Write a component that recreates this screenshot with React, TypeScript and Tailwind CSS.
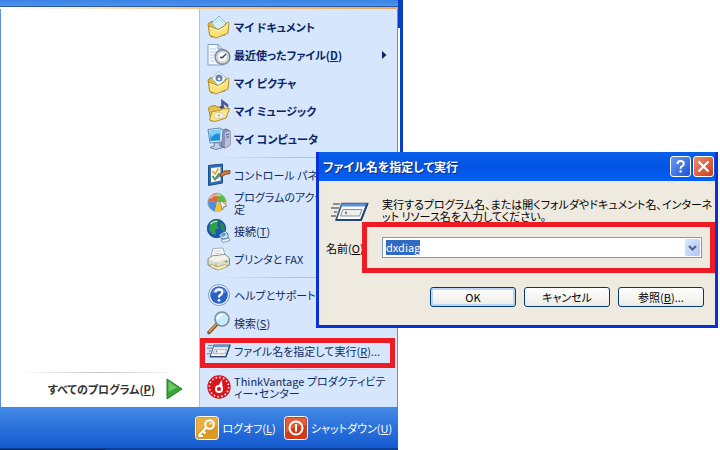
import { ReactNode, useEffect, useRef } from 'react';

interface MenuItemProps {
  icon: ReactNode;
  children: ReactNode;
  bold?: boolean;
  submenu?: boolean;
  marked?: boolean;
}

function DocumentsIcon() {
  return (
    <svg viewBox="0 0 24 24" className="size-6 shrink-0">
      <path d="M1 9 L3 7 L8 6 L18 7 L18 20 L4 22 Z" fill="#e6bd43" stroke="#a98522" />
      <path d="M5 8 L12 1 L19 8 L12 17 Z" fill="#d6f0fb" stroke="#8fc0da" />
      <path d="M8 8 L12 4 L16 8" fill="none" stroke="#a9d6ea" />
      <path d="M1.5 11 L2.5 20 L9 23 L21 18 L22 7.5 L20.500 7 L18 10.500 L11 14.500 Z" fill="#fbe27a" stroke="#b08e2c" />
      <path d="M3 12.500 L11 16 L18.500 12 L21 8.500" fill="none" stroke="#fff8c4" />
    </svg>
  );
}

function RecentIcon() {
  return (
    <svg viewBox="0 0 24 24" className="size-6 shrink-0">
      <path d="M1 1.5 H11 L16 6 V22 H1 Z" fill="#f4faff" stroke="#7f9fc8" />
      <path d="M11 1.5 V6 H16" fill="#c6dcf3" stroke="#7f9fc8" />
      <path d="M3 6 H9 M3 9 H10 M3 12 H8 M3 15 H7 M3 18 H8" stroke="#b5cdea" />
      <circle cx="15.500" cy="14" r="7.300" fill="#d4dade" stroke="#7b838c" strokeWidth="1.400" />
      <circle cx="15.500" cy="14" r="5" fill="#fbfdff" stroke="#b7c1cb" strokeWidth="0.8" />
      <path d="M19 11 L15.500 14.500 L13 14.500" fill="none" stroke="#31465e" strokeWidth="1.4" />
    </svg>
  );
}

function PicturesIcon() {
  return (
    <svg viewBox="0 0 24 24" className="size-6 shrink-0">
      <path d="M1 9 L3 7 L8 6 L18 7 L18 20 L4 22 Z" fill="#e6bd43" stroke="#a98522" />
      <path d="M5 7 L12 0.500 L19 7 L12 16 Z" fill="#fff" stroke="#9db8d6" />
      <circle cx="12" cy="7" r="3.600" fill="#3f8fd8" />
      <path d="M9.500 7.500 L12 3.800 L14.500 7.500 Z" fill="#d9664b" />
      <circle cx="12" cy="8" r="1.300" fill="#e9f4ff" />
      <path d="M1.5 11 L2.5 20 L9 23 L21 18 L22 7.5 L20.500 7 L18 10.500 L11 14.500 Z" fill="#fbe27a" stroke="#b08e2c" />
      <path d="M3 12.500 L11 16 L18.500 12 L21 8.500" fill="none" stroke="#fff8c4" />
    </svg>
  );
}

function MusicIcon() {
  return (
    <svg viewBox="0 0 24 24" className="size-6 shrink-0">
      <path d="M1.5 9 L3 7.500 L8 6.500 L10 8 L17 7.500 L19 19 L4 22 Z" fill="#e9c54d" stroke="#a98522" />
      <path d="M2.5 21 L5 12.500 L13 11.500 L15 10 L22.5 9.500 L19 19 L8 22.5 Z" fill="#fbe78b" stroke="#b08e2c" />
      <ellipse cx="12" cy="16.500" rx="5" ry="3" fill="#f0f1e2" stroke="#cfc892" strokeWidth="0.8" />
      <circle cx="12" cy="16.500" r="1" fill="#b9a455" />
      <ellipse cx="14.500" cy="8.500" rx="1.800" ry="1.300" fill="#3b4a92" />
      <path d="M14.500 8 V0.5 L21 5.500 V8.500 L16.500 4.5 V9 Z" fill="#4b5a9e" stroke="#2c3878" strokeWidth="0.500" />
    </svg>
  );
}

function ComputerIcon() {
  return (
    <svg viewBox="0 0 24 24" className="size-6 shrink-0">
      <path d="M14 4 L19 2 L23 4 V18 L18 21 L14 19 Z" fill="#8b93bb" stroke="#5b628c" />
      <path d="M18 5.5 L23 4 V18 L18 21 Z" fill="#b8bfdd" />
      <path d="M19 8 L22 7 M19 10.5 L22 9.5" stroke="#565e8c" />
      <path d="M1 2.5 L13 1 L16 3 L15 15 L3 16 Z" fill="#dfe8f5" stroke="#6c84ae" />
      <path d="M2.5 4 L13.5 2.5 L13 13.5 L3.5 14 Z" fill="#1f8fe0" />
      <path d="M2.5 4 L13.5 2.5 L13.3 7 Q8 5 4 11 Z" fill="#7cd2fb" />
      <path d="M7 16 L12 15.5 L13 19 L16 20.5 L9 22.5 L3 20.5 L7.5 19 Z" fill="#c5d0e6" stroke="#6c7fa6" />
    </svg>
  );
}

function ControlPanelIcon() {
  return (
    <svg viewBox="0 0 24 24" className="size-6 shrink-0">
      <path d="M1.5 2.5 L15.5 1 V20 L1.5 22.5 Z" fill="#2f6cb6" stroke="#1d4b86" />
      <path d="M4 5 L13.5 4 V17.5 L4 19.5 Z" fill="#f6fafd" />
      <path d="M5.500 8 L8 11 L11.500 5.500" fill="none" stroke="#e2a01f" strokeWidth="1.500" />
      <path d="M5.500 13 L8 16.500 L12.500 10" fill="none" stroke="#4f9a4a" strokeWidth="1.800" />
      <path d="M9 15.500 L15 10.500" stroke="#5f7fa8" strokeWidth="2" />
      <path d="M13 11 L17 8 L23 7.500 V10.500 L18.5 11.500 L14 14 Z" fill="#c77a3d" stroke="#744020" strokeWidth="0.8" />
    </svg>
  );
}

function ProgramsIcon() {
  return (
    <svg viewBox="0 0 24 24" className="size-6 shrink-0">
      <circle cx="10" cy="11.500" r="9.3" fill="#e8eef2" stroke="#a9b5bd" />
      <path d="M10 11.500 V2.500 A9 9 0 0 0 1.200 10 Z" fill="#e2673d" />
      <path d="M10 11.500 L1.200 10 A9 9 0 0 0 8 20.300 Z" fill="#4f8fdc" />
      <path d="M10 11.500 V2.500 A9 9 0 0 1 19 11 Z" fill="#5dbb3c" />
      <path d="M10 11.500 L19 11 A9 9 0 0 1 8 20.300 Z" fill="#f4c430" />
      <path d="M3 7.500 Q7 2.500 14 4.500" fill="none" stroke="#fff" strokeOpacity="0.6" strokeWidth="1.5" />
      <path d="M13 9 L20 15 L16.5 15.500 L15 19 Z" fill="#fff" stroke="#6d7c88" strokeWidth="0.8" />
    </svg>
  );
}

function ConnectIcon() {
  return (
    <svg viewBox="0 0 24 24" className="size-6 shrink-0">
      <circle cx="9.500" cy="9.500" r="9.2" fill="#1b55b5" stroke="#123c80" strokeWidth="0.8" />
      <path d="M3 4 Q7 0 12 1.500 L10 6 L12 9 L8 11 L9 16 L5 15 L2 11 Z" fill="#2f9d4a" />
      <path d="M13 3 L17.500 6 L18 12 L14 11 Z" fill="#2a8748" />
      <path d="M3.500 5 Q6.500 2 10 2.5" fill="none" stroke="#c8f2be" strokeWidth="1.2" />
      <path d="M12 16 L18 12 L21 15 V19 L15 20 Z" fill="#dbe7f6" stroke="#52719f" />
      <path d="M13.5 16 L17.5 13.5 L19.5 15.5 L16 18 Z" fill="#4f9ee0" />
      <path d="M14 21 L22 19 L23 21.5 L16 23.5 Z" fill="#edf3fb" stroke="#7589a8" strokeWidth="0.8" />
    </svg>
  );
}

function PrinterIcon() {
  return (
    <svg viewBox="0 0 24 24" className="size-6 shrink-0">
      <path d="M4 9 L6 1.5 L16 1 L18 8 L17 11 L5 13 Z" fill="#fff" stroke="#a2a8af" />
      <path d="M7 4 H14 M7 6.5 H15" stroke="#c3d3e5" />
      <path d="M1 12 L5 9 L18 7.5 L22.5 11 V18 L9 22.5 L1 18 Z" fill="#dddccf" stroke="#85867e" />
      <path d="M1.5 12 L9 15.5 L22 11.5 L18 8 L5 9.5 Z" fill="#f4f3ea" />
      <path d="M9 15.5 V22" stroke="#a5a699" />
      <path d="M4 17 L10 20 L18 17.5 L21 19.5 L11 23 L3 19.5 Z" fill="#fbf1b9" stroke="#a59b66" strokeWidth="0.8" />
      <path d="M18 14.5 H20.5" stroke="#49a944" strokeWidth="1.5" />
    </svg>
  );
}

function HelpIcon() {
  return (
    <svg viewBox="0 0 24 24" className="size-6 shrink-0">
      <circle cx="12" cy="12" r="10.5" fill="#f0f6ff" stroke="#7f98c7" />
      <circle cx="12" cy="12" r="8.8" fill="#2b62c9" />
      <path d="M4.5 10 A8 8 0 0 1 19.5 10 Q12 7 4.5 10" fill="#5f8fe2" />
      <path d="M8.5 9.5 Q8.8 6.3 12 6.3 Q15.5 6.5 15.3 9.3 Q15.1 11 13 12.2 Q12 13 12 14.5" fill="none" stroke="#fff" strokeWidth="2.2" />
      <circle cx="12" cy="17.3" r="1.4" fill="#fff" />
    </svg>
  );
}

function SearchIcon() {
  return (
    <svg viewBox="0 0 24 24" className="size-6 shrink-0">
      <path d="M9.5 13.5 L2 21.5" stroke="#7c4f1f" strokeWidth="3.500" strokeLinecap="round" />
      <path d="M9 13.5 L2.5 20.5" stroke="#d9a056" strokeWidth="1.800" strokeLinecap="round" />
      <circle cx="15" cy="8" r="7" fill="#c9ecfb" stroke="#7b8b9e" strokeWidth="1.6" />
      <path d="M10.500 8 Q11.500 4 15.500 3.800" fill="none" stroke="#fff" strokeWidth="2" />
    </svg>
  );
}

function RunIcon({ className }: { className: string }) {
  return (
    <svg viewBox="0 0 38 20" preserveAspectRatio="none" className={className}>
      <path d="M11 1.500 H36.5 L30 18 H5 Z" fill="#fbfcfd" stroke="#38567f" strokeWidth="1.6" />
      <path d="M11 1.500 H36.5 L35.5 4.500 H10 Z" fill="#5a92dc" />
      <path d="M36.5 1.500 L30 18 H5" fill="none" stroke="#26456f" strokeWidth="2" />
      <path d="M12 7.500 H31 L28.5 14 H9.5 Z" fill="#eef0ee" stroke="#868f98" />
      <path d="M15.500 9.500 L14.500 12" stroke="#5a6570" strokeWidth="1.5" />
      <path d="M2 2 H9 M0 6 H8 M3 10 H6 M0 14 H5" stroke="#6a7079" strokeWidth="1.4" />
    </svg>
  );
}

function GaugeIcon() {
  return (
    <svg viewBox="0 0 24 24" className="size-6 shrink-0">
      <circle cx="12" cy="12" r="11.7" fill="#d8141c" />
      <circle cx="12" cy="12" r="9.500" fill="none" stroke="#fff" strokeWidth="1.800" strokeDasharray="1.500 2.230" />
      <circle cx="12" cy="12" r="8.700" fill="#d8141c" />
      <path d="M10 13 L15 4.500 L15.500 13 Z" fill="#fff" />
      <circle cx="12" cy="14" r="4" fill="#fff" />
      <circle cx="12" cy="14" r="2" fill="#d8141c" />
    </svg>
  );
}

function KeyIcon() {
  return (
    <svg viewBox="0 0 24 24" className="size-6 shrink-0">
      <rect x="0.5" y="0.5" width="23" height="23" rx="3" fill="#dd9a22" stroke="#fff" />
      <path d="M2 2 H22 V9 Q10 9 2 17 Z" fill="#e9b045" />
      <circle cx="14.5" cy="8.5" r="4.3" fill="none" stroke="#fff" strokeWidth="2" />
      <path d="M11.5 11.5 L4.5 18.5 V20 H8 M8 15 L10.5 17.5" fill="none" stroke="#fff" strokeWidth="2" />
      <circle cx="15.5" cy="7.5" r="1" fill="#fff" />
    </svg>
  );
}

function PowerIcon() {
  return (
    <svg viewBox="0 0 24 24" className="size-6 shrink-0">
      <rect x="0.5" y="0.5" width="23" height="23" rx="3" fill="#cf3d18" stroke="#fff" />
      <path d="M2 2 H22 V9 Q10 9 2 17 Z" fill="#e0603a" />
      <circle cx="12" cy="12" r="6.5" fill="none" stroke="#fff" strokeWidth="2" />
      <path d="M12 8 V15.5" stroke="#fff" strokeWidth="2" />
    </svg>
  );
}

function MenuItem({ icon, children, bold, submenu, marked }: MenuItemProps) {
  return (
    <li className="relative">
      <button
        type="button"
        className={
          bold
            ? 'flex h-7 w-full items-center gap-[3px] pl-[7px] text-left leading-[12px] font-bold text-[#0a246a]'
            : 'flex h-7 w-full items-center gap-[3px] pl-[7px] text-left leading-[12px] text-[#0f2c66]'
        }
      >
        {icon}
        <span className="min-w-0 flex-1 whitespace-nowrap">{children}</span>
        {submenu && (
          <svg viewBox="0 0 5 8" className="mr-[10px] h-2 w-[5px]">
            <path d="M0 0 L4.5 4 L0 8 Z" fill="#0a246a" />
          </svg>
        )}
      </button>
      {marked && <span className="pointer-events-none absolute top-px right-0.5 -bottom-[3px] left-0 border-[5px] border-[#ed1c24]" />}
    </li>
  );
}

function Separator() {
  return <li role="separator" className="mx-auto mt-1 mb-[3px] h-px w-5/6 bg-linear-to-r from-transparent via-[#a3bfe9] to-transparent" />;
}

function StartMenu() {
  return (
    <nav className="flex flex-1 flex-col">
      <div className="h-[7px] border-b border-[#2a5a9c] bg-linear-to-b from-[#3b82e6] to-[#4a93ee]" />
      <div className="h-0.5 bg-linear-to-r from-white via-[#f6c689] to-[#e9a765]" />
      <div className="flex flex-1 border-x border-[#5b8fe0]">
        <div className="flex flex-1 flex-col justify-end pb-[2px]">
          <div className="mx-5 h-px bg-linear-to-r from-transparent via-[#c4c4c4] to-transparent" />
          <button type="button" className="flex h-8 items-center justify-end gap-[11px] pr-4 font-bold text-[#333]">
            <span>
              すべてのプログラム(<u>P</u>)
            </span>
            <svg viewBox="0 0 17 22" className="h-[22px] w-[17px]">
              <path d="M1 1 L16 11 L1 21 Z" fill="#37a637" stroke="#1f7d24" strokeLinejoin="round" />
              <path d="M2.5 3.5 L11 9.500 L2.5 14 Z" fill="#6cc968" />
            </svg>
          </button>
        </div>
        <ul className="w-1/2 border-l border-l-[#a5c3f0] bg-[#d6e6fc] pt-1 pb-[6px]">
          <MenuItem bold icon={<DocumentsIcon />}>マイ ドキュメント</MenuItem>
          <MenuItem bold submenu icon={<RecentIcon />}>
            最近使ったファイル(<u>D</u>)
          </MenuItem>
          <MenuItem bold icon={<PicturesIcon />}>マイ ピクチャ</MenuItem>
          <MenuItem bold icon={<MusicIcon />}>マイ ミュージック</MenuItem>
          <MenuItem bold icon={<ComputerIcon />}>マイ コンピュータ</MenuItem>
          <Separator />
          <MenuItem icon={<ControlPanelIcon />}>コントロール パネル</MenuItem>
          <MenuItem icon={<ProgramsIcon />}>
            プログラムのアクセスと既
            <br />定
          </MenuItem>
          <MenuItem icon={<ConnectIcon />}>
            接続(<u>T</u>)
          </MenuItem>
          <MenuItem icon={<PrinterIcon />}>プリンタと FAX</MenuItem>
          <Separator />
          <MenuItem icon={<HelpIcon />}>
            ヘルプとサポート(<u>H</u>)
          </MenuItem>
          <MenuItem icon={<SearchIcon />}>
            検索(<u>S</u>)
          </MenuItem>
          <MenuItem marked icon={<RunIcon className="h-[14px] w-6 shrink-0" />}>
            ファイル名を指定して実行(<u>R</u>)...
          </MenuItem>
          <Separator />
          <MenuItem icon={<GaugeIcon />}>
            ThinkVantage プロダクティビテ
            <br />ィー・センター
          </MenuItem>
        </ul>
      </div>
      <div className="flex h-[42px] items-center justify-end gap-2 border-b border-[#0b3f9c] bg-linear-to-b from-[#4389e6] to-[#1459cf] pr-1.5 text-white">
        <button type="button" className="flex items-center gap-[3px]">
          <KeyIcon />
          <span>
            ログオフ(<u>L</u>)
          </span>
        </button>
        <button type="button" className="flex items-center gap-[3px]">
          <PowerIcon />
          <span>
            シャットダウン(<u>U</u>)
          </span>
        </button>
      </div>
      <div className="h-px bg-linear-to-r from-[#0b330b] from-26% to-[#0b3f9c] to-27%" />
    </nav>
  );
}

const dialogButton =
  'h-5 w-[86px] rounded-[3px] border border-[#003c74] bg-linear-to-b from-white to-[#ecebe5] text-center leading-none';

function RunDialog() {
  const field = useRef<HTMLInputElement>(null);

  useEffect(() => {
    field.current?.focus();
    field.current?.select();
  }, []);

  return (
    <section
      role="dialog"
      aria-labelledby="run-title"
      className="absolute top-[152px] right-0.5 left-[316px] border-[3px] border-t-0 border-[#0831d9] bg-[#eeeae0]"
    >
      <header className="flex h-[29px] items-center gap-0.5 bg-linear-to-b from-[#0a5fe8] via-[#0354e3] to-[#0560f5] pr-px pl-1 text-white">
        <h1 id="run-title" className="flex-1 text-[12px] font-bold [text-shadow:1px_1px_#0f2a80]">
          ファイル名を指定して実行
        </h1>
        <button type="button" aria-label="ヘルプ" className="size-[21px] rounded-[3px] border border-white bg-linear-to-br from-[#6d9cf5] to-[#1c50d4]">
          <svg viewBox="0 0 19 19">
            <path d="M6.5 7 Q6.5 4 9.5 4 Q12.8 4 12.8 6.7 Q12.8 8.3 10.8 9.3 Q9.6 10 9.6 11.8" fill="none" stroke="#fff" strokeWidth="2" />
            <rect x="8.5" y="13.3" width="2.2" height="2.2" fill="#fff" />
          </svg>
        </button>
        <button type="button" aria-label="閉じる" className="size-[21px] rounded-[3px] border border-white bg-linear-to-br from-[#ee8b6c] to-[#cc3a12]">
          <svg viewBox="0 0 19 19">
            <path d="M4.5 4.5 L14.5 14.5 M14.5 4.5 L4.5 14.5" stroke="#fff" strokeWidth="2.2" />
          </svg>
        </button>
      </header>
      <form className="pt-[17px] pb-[18px] text-black">
        <div className="flex h-6 items-center gap-[13px] pl-3">
          <RunIcon className="mt-1 h-5 w-[38px] shrink-0" />
          <p className="leading-[12px] whitespace-nowrap">
            実行するプログラム名、または開くフォルダやドキュメント名、インターネ
            <br />
            ット リソース名を入力してください。
          </p>
        </div>
        <div className="relative flex h-[51px] items-center pr-[13px] pl-[7px]">
          <label htmlFor="run-name" className="w-14 shrink-0 whitespace-nowrap">
            名前(<u>O</u>):
          </label>
          <div className="flex h-[21px] flex-1 items-center border border-[#7f9db9] bg-white p-px">
            <input
              id="run-name"
              ref={field}
              type="text"
              defaultValue="dxdiag"
              className="h-[15px] min-w-0 flex-1 pl-0.5 leading-[15px] outline-none selection:bg-[#316ac5] selection:text-white"
            />
            <button type="button" aria-label="一覧" className="flex h-[17px] w-[15px] items-center justify-center rounded-[2px] bg-linear-to-br from-[#dbe6fd] to-[#b0c6f6]">
              <svg viewBox="0 0 9 6" className="h-[6px] w-[9px]">
                <path d="M1 1 L4.5 4.5 L8 1" fill="none" stroke="#4d6185" strokeWidth="2" />
              </svg>
            </button>
          </div>
          <span className="pointer-events-none absolute inset-y-0 right-0 left-[43px] border-[5px] border-[#ed1c24]" />
        </div>
        <div className="mt-[14px] flex justify-end gap-2 pr-[11px]">
          <button type="button" className={`${dialogButton} shadow-[inset_0_0_0_2px_#bcd4f6]`}>
            OK
          </button>
          <button type="button" className={dialogButton}>
            キャンセル
          </button>
          <button type="button" className={dialogButton}>
            参照(<u>B</u>)...
          </button>
        </div>
      </form>
    </section>
  );
}

export default function App() {
  return (
    <main className="relative min-h-screen overflow-hidden bg-white font-['Noto_Sans_CJK_JP',sans-serif] text-[11px] leading-[14px] [font-feature-settings:'palt']">
      <div className="flex min-h-screen w-[56%]">
        <StartMenu />
        {/* edge of the window behind the menu */}
        <div className="h-40 w-[5px] bg-[#0a3cc4]">
          <div className="mt-7 h-full w-0.5 bg-white" />
        </div>
      </div>
      <RunDialog />
    </main>
  );
}
